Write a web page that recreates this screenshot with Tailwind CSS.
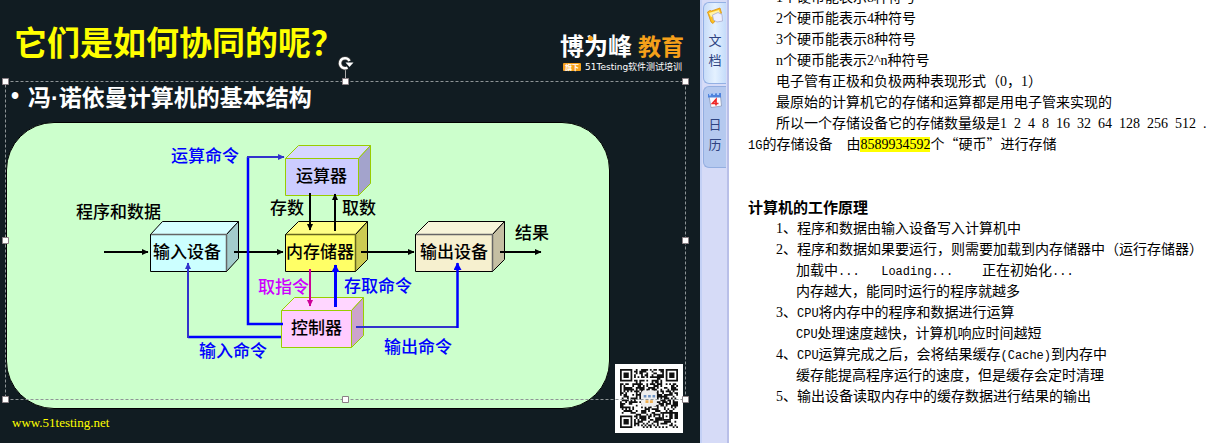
<!DOCTYPE html>
<html lang="zh-CN">
<head>
<meta charset="utf-8">
<title>它们是如何协同的呢？</title>
<script src="https://cdn.jsdelivr.net/npm/@tailwindcss/browser@4"></script>
</head>
<body class="bg-white font-['Noto_Sans_CJK_SC',sans-serif] text-black">
<div class="grid h-screen grid-cols-[700fr_29fr_482fr] overflow-hidden">

  <!-- Slide -->
  <section class="relative flex min-w-0 flex-col bg-[#111c22]">
    <header class="flex h-20 items-start justify-between pt-[18px] pr-4 pl-[14px]">
      <h1 class="text-[33px] leading-[46px] font-bold whitespace-nowrap text-[#ffff00]">它们是如何协同的呢？</h1>
      <div class="flex w-[124px] flex-col gap-[2px] pt-3">
        <div class="flex items-center justify-between leading-[30px] font-bold whitespace-nowrap">
          <span class="relative text-2xl leading-[30px] text-white">博为峰<i class="absolute top-[6px] left-[28px] size-[5px] rounded-full bg-[#f5a01a]"></i></span>
          <span class="text-[23px] text-[#f5a01a]">教育</span>
        </div>
        <div class="flex items-center gap-1 pl-[3px] text-[9px] leading-[10px] whitespace-nowrap text-white">
          <span class="rounded-[1px] bg-[#f5a01a] px-[2px] text-[7px] leading-[8px] font-bold">旗下</span>
          <span><span class="font-['DejaVu_Sans']">51Testing</span>软件测试培训</span>
        </div>
      </div>
    </header>

    <ul class="flex h-[42px] items-start pl-[11px] text-[23px] leading-8 font-bold whitespace-nowrap text-white">
      <li class="flex"><span class="w-[17px] font-['Liberation_Sans']">•</span><span>冯<span class="font-['Liberation_Sans']">·</span>诺依曼计算机的基本结构</span></li>
    </ul>

    <div class="mr-[90px] ml-[6px] overflow-hidden rounded-[48px] border border-black bg-[#ccffcc]">
      <svg class="block w-full" viewBox="7 123 602 285" role="img" aria-label="冯·诺依曼计算机的基本结构">
        <defs>
          <marker id="k" markerUnits="userSpaceOnUse" markerWidth="7" markerHeight="7" refX="6" refY="3.5" orient="auto"><path d="M0 .5L6.5 3.5L0 6.5Z" fill="#000"/></marker>
          <marker id="m" markerUnits="userSpaceOnUse" markerWidth="7" markerHeight="7" refX="6" refY="3.5" orient="auto"><path d="M0 .5L6.5 3.5L0 6.5Z" fill="#cc0099"/></marker>
          <marker id="d" markerUnits="userSpaceOnUse" markerWidth="7" markerHeight="7" refX="6" refY="3.5" orient="auto"><path d="M0 .5L6.5 3.5L0 6.5Z" fill="#3333cc"/></marker>
          <marker id="b" markerUnits="userSpaceOnUse" markerWidth="8" markerHeight="8" refX="7" refY="4" orient="auto"><path d="M0 0L7.5 4L0 8Z" fill="#0000ff"/></marker>
        </defs>

        <!-- Devices -->
        <g stroke-width="1" stroke-linejoin="round">
          <g stroke="#000">
            <path fill="#d6ffff" d="M150.5 234.5L162.5 221.5H238.5L226.5 234.5Z"/><path fill="#a3cccc" d="M226.5 234.5L238.5 221.5V258.5L226.5 271.5Z"/><path fill="#ccffff" d="M150.5 234.5H226.5V271.5H150.5Z"/>
            <path fill="#ffff85" d="M285.5 234.5L298.5 221.5H367.5L355.5 234.5Z"/><path fill="#cccc52" d="M355.5 234.5L367.5 221.5V259.5L355.5 271.5Z"/><path fill="#ffff66" d="M285.5 234.5H355.5V271.5H285.5Z"/>
            <path fill="#f7f5d9" d="M415.5 234.5L428.5 221.5H504.5L492.5 234.5Z"/><path fill="#c5bfa3" d="M492.5 234.5L504.5 221.5V259.5L492.5 271.5Z"/><path fill="#f6f0cf" d="M415.5 234.5H492.5V271.5H415.5Z"/>
          </g>
          <g fill="none" stroke="#666" stroke-width="1.5">
            <path d="M151 234.5H226.5V271"/><path d="M286 234.5H355.5V271" stroke="#66661f"/><path d="M416 234.5H492.5V271"/>
          </g>
          <g stroke="#99cc00">
            <path fill="#d6d6ff" d="M285.5 158.5L298.5 145.5H370.5L358.5 158.5Z"/><path fill="#a3a3cc" d="M358.5 158.5L370.5 145.5V183.5L358.5 195.5Z"/><path fill="#ccccff" d="M285.5 158.5H358.5V195.5H285.5Z"/>
            <path fill="#ffd6ff" d="M281.5 310.5L294.5 297.5H363.5L351.5 310.5Z"/><path fill="#cca3cc" d="M351.5 310.5L363.5 297.5V335.5L351.5 347.5Z"/><path fill="#ffccff" d="M281.5 310.5H351.5V347.5H281.5Z"/>
          </g>
        </g>

        <!-- Data flow -->
        <g fill="none" stroke="#000" stroke-width="2">
          <path d="M104 252H148" marker-end="url(#k)"/><path d="M234 252H283" marker-end="url(#k)"/>
          <path d="M361 252H414" marker-end="url(#k)"/><path d="M500 252H541" marker-end="url(#k)"/>
          <path d="M310 193V230" marker-end="url(#k)"/><path d="M335 231V194" marker-end="url(#k)"/>
          <path d="M310 269V306" stroke="#cc0099" marker-end="url(#m)"/>
        </g>
        <!-- Control flow -->
        <g fill="none" stroke="#0000ff">
          <path d="M283 324H248V157" stroke-width="2.5"/><path d="M247 157H284" stroke="#3333cc" stroke-width="2" marker-end="url(#d)"/>
          <path d="M281 337H188" stroke-width="2.5"/><path d="M188 338V263" stroke="#3333cc" stroke-width="2" marker-end="url(#d)"/>
          <path d="M356 327H458" stroke="#3333cc" stroke-width="2"/><path d="M457.5 328V263" stroke-width="2.5" marker-end="url(#b)"/>
          <path d="M335.5 307V265" stroke-width="3" marker-end="url(#b)"/>
        </g>

        <g class="text-[17px] font-medium" fill="#000">
          <text x="76" y="218">程序和数据</text><text x="153" y="258">输入设备</text>
          <text x="296" y="182">运算器</text><text x="270" y="214">存数</text><text x="342" y="214">取数</text>
          <text x="286" y="258">内存储器</text><text x="420" y="258">输出设备</text>
          <text x="515" y="239">结果</text><text x="291" y="334">控制器</text>
          <text x="258" y="293" fill="#cc00ff">取指令</text>
          <g fill="#0000ff">
            <text x="171" y="162">运算命令</text><text x="344" y="292">存取命令</text>
            <text x="199" y="357">输入命令</text><text x="384" y="353">输出命令</text>
          </g>
        </g>
      </svg>
    </div>

    <footer class="px-3 pt-1 font-['Liberation_Serif',serif] text-[13px] leading-5 text-[#ffff00]"><a href="#">www.51testing.net</a></footer>

    <!-- QR code -->
    <div class="absolute right-[17px] bottom-[10px] h-[69px] w-[68px] bg-white p-[5px]">
      <svg class="block size-full" viewBox="0 0 33 33" preserveAspectRatio="none" role="img" aria-label="QR">
        <path id="qr" fill="#111"/>
        <path fill="none" stroke="#111" d="M.5 .5h6v6h-6zM26.5 .5h6v6h-6zM.5 26.5h6v6h-6zM24.5 24.5h4v4h-4z"/>
        <path fill="#111" d="M2 2h3v3h-3zM28 2h3v3h-3zM2 28h3v3h-3zM26 26h1v1h-1z"/>
        <rect x="12" y="12" width="9" height="9" rx="2" fill="#eee"/>
        <path d="M13.5 14.5h1.5v1.5h-1.5zM16 14.5h1.5v1.5h-1.5zM18.5 14.5h1.5v1.5h-1.5z" fill="#6d93c4"/>
        <path d="M14.5 17.5h1.7v1.5h-1.7zM17 17.5h1.7v1.5h-1.7z" fill="#efb052"/>
      </svg>
    </div>

    <!-- Selection frame -->
    <svg class="pointer-events-none absolute top-[55px] left-0 h-[350px] w-[700px]" viewBox="0 55 700 350" fill="none" aria-hidden="true">
      <path d="M5.5 81.5H685.5V399.5H5.5Z" stroke="#8e9496" stroke-dasharray="3 2"/>
      <path d="M345.5 68V81" stroke="#aaa"/>
      <path d="M347.5 67.5A5 5 0 1 1 349.5 61" stroke="#444" stroke-width="4"/>
      <path d="M347.5 67.5A5 5 0 1 1 349.5 61" stroke="#fff" stroke-width="2.5"/>
      <path d="M345.5 62.5H353.5L349.5 67Z" fill="#fff"/>
      <g fill="#fff" stroke="#8b8085">
        <path d="M2.5 78.5h6v6h-6zM342.5 78.5h6v6h-6zM682.5 78.5h6v6h-6zM2.5 237.5h6v6h-6zM682.5 237.5h6v6h-6zM2.5 396.5h6v6h-6zM342.5 396.5h6v6h-6zM682.5 396.5h6v6h-6z"/>
      </g>
    </svg>
  </section>

  <!-- Side tabs -->
  <nav class="flex flex-col gap-[2px] border-x-2 border-l-[#c3d0f5] border-r-[#b9bfe8] bg-[#d6dbf7] pt-[2px] pr-[1px] pl-[1px] text-[13px] leading-5 text-[#2e4482]">
    <button class="flex h-[82px] w-full flex-col items-center rounded-l-md border border-r-0 border-[#93b0e4] bg-linear-to-r from-[#c8dcf8] via-[#e4f1ff] to-[#c5dcfa] pt-[4px]">
      <svg class="mb-[5px] size-[18px] shrink-0" viewBox="0 0 18 18" aria-hidden="true">
        <path d="M1.5 5L4 3.5L5.5 4L14 1L15.5 6L7 16.5L5 15Z" fill="#fdc21f" stroke="#d98e12" stroke-width=".8"/>
        <path d="M3 6L13 3L14 6L5 10Z" fill="#fff3a8"/>
        <path d="M6.5 8L12 5.5L16 7.5L16.5 14L11 15L7.5 13Z" fill="#eef0ff" stroke="#a9acd0" stroke-width=".8"/>
      </svg>
      <span>文</span><span>档</span>
    </button>
    <button class="flex h-[82px] w-full flex-col items-center rounded-l-md border border-r-0 border-[#93aee0] bg-[#b5c9ef] pt-[4px]">
      <svg class="mb-[5px] size-[18px] shrink-0" viewBox="0 0 18 18" aria-hidden="true">
        <path d="M3 5H14.5L15.5 15L5 16.5Z" fill="#fafbff" stroke="#8d99b9" stroke-width=".8"/>
        <path d="M2 3L15 2V6.5H2Z" fill="#4f83dc"/><path d="M3 2.5h2v2h-2zM7 2h2v2h-2zM11 2h2v2h-2z" fill="#a8c8fa"/>
        <path d="M10 14.5V8.5L6.5 12.5H12.5" fill="none" stroke="#ed2626" stroke-width="1.7"/>
      </svg>
      <span>日</span><span>历</span>
    </button>
  </nav>

  <!-- Notes -->
  <main class="-mt-[14px] min-w-0 overflow-hidden pl-[19px] text-sm leading-[21px] [&_p]:whitespace-pre">
    <div class="pl-7">
      <p class="h-[21px]"><span class="font-['Liberation_Serif']">1</span>个硬币能表示<span class="font-['Liberation_Serif']">8</span>种符号</p>
      <p class="h-[21px]"><span class="font-['Liberation_Serif']">2</span>个硬币能表示<span class="font-['Liberation_Serif']">4</span>种符号</p>
      <p class="h-[21px]"><span class="font-['Liberation_Serif']">3</span>个硬币能表示<span class="font-['Liberation_Serif']">8</span>种符号</p>
      <p class="h-[21px]"><span class="font-['Liberation_Serif']">n</span>个硬币能表示<span class="font-['Liberation_Serif']">2^n</span>种符号</p>
      <p class="h-[21px]">电子管有正极和负极两种表现形式（<span class="font-['Liberation_Serif']">0</span>，<span class="font-['Liberation_Serif']">1</span>）</p>
      <p class="h-[21px]">最原始的计算机它的存储和运算都是用电子管来实现的</p>
      <p class="h-[21px]">所以一个存储设备它的存储数量级是<span class="font-['Liberation_Serif']">1  2  4  8  16  32  64  128  256  512  .</span></p>
    </div>
    <p class="h-[21px]"><span class="font-['Liberation_Mono'] text-xs">1G</span>的存储设备　由<mark class="inline-block h-[15px] bg-[#ffff00] font-['Liberation_Serif'] leading-[15px] text-black">8589934592</mark>个“硬币”进行存储</p>
    <h2 class="mt-[42px] h-[21px] text-[15px] font-bold">计算机的工作原理</h2>
    <div class="pl-7">
      <p class="h-[21px]"><span class="font-['Liberation_Serif']">1</span>、程序和数据由输入设备写入计算机中</p>
      <p class="h-[21px]"><span class="font-['Liberation_Serif']">2</span>、程序和数据如果要运行，则需要加载到内存储器中（运行存储器）</p>
      <p class="h-[21px] pl-5">加载中<span class="font-['Liberation_Mono'] text-xs">...   Loading...    </span>正在初始化<span class="font-['Liberation_Mono'] text-xs">...</span></p>
      <p class="h-[21px] pl-5">内存越大，能同时运行的程序就越多</p>
      <p class="h-[21px]"><span class="font-['Liberation_Serif']">3</span>、<span class="font-['Liberation_Mono'] text-xs">CPU</span>将内存中的程序和数据进行运算</p>
      <p class="h-[21px] pl-5"><span class="font-['Liberation_Mono'] text-xs">CPU</span>处理速度越快，计算机响应时间越短</p>
      <p class="h-[21px]"><span class="font-['Liberation_Serif']">4</span>、<span class="font-['Liberation_Mono'] text-xs">CPU</span>运算完成之后，会将结果缓存<span class="font-['Liberation_Mono'] text-xs">(Cache)</span>到内存中</p>
      <p class="h-[21px] pl-5">缓存能提高程序运行的速度，但是缓存会定时清理</p>
      <p class="h-[21px]"><span class="font-['Liberation_Serif']">5</span>、输出设备读取内存中的缓存数据进行结果的输出</p>
    </div>
  </main>
</div>
<script>
  // Fill the QR data area, leaving the three finder squares and the alignment square clear.
  let seed = 51, d = '';
  for (let y = 0; y < 33; y++) for (let x = 0; x < 33; x++) {
    seed = (seed * 1103515245 + 12345) % 2147483648;
    const finder = (x < 8 && y < 8) || (x > 24 && y < 8) || (x < 8 && y > 24);
    const align = x > 23 && x < 29 && y > 23 && y < 29;
    if (!finder && !align && (seed >> 16) % 100 < 52) d += `M${x} ${y}h1v1h-1z`;
  }
  document.getElementById('qr').setAttribute('d', d);
</script>
</body>
</html>
